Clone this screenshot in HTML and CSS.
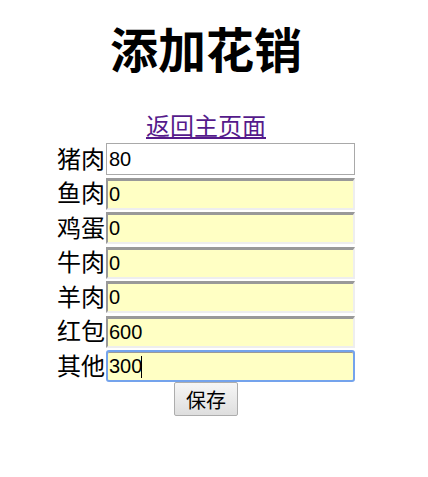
FILE: index.html
```html
<!DOCTYPE html>
<html lang="zh-CN">
  <head>
    <meta charset="UTF-8" />
    <title>添加花销</title>
    <meta name="viewport" content="width=device-width, initial-scale=1.0" />
    <link rel="stylesheet" href="styles.css">
  </head>
  <body>
    <div class="page">
      <h1>添加花销</h1>

      <a class="back" href="#">返回主页面</a>

      <form class="cost-form">
        <div class="row">
          <label for="pork">猪肉</label>
          <input type="text" id="pork" value="80" />
        </div>
        <div class="row">
          <label for="fish">鱼肉</label>
          <input type="text" id="fish" class="filled" value="0" />
        </div>
        <div class="row">
          <label for="egg">鸡蛋</label>
          <input type="text" id="egg" class="filled" value="0" />
        </div>
        <div class="row">
          <label for="beef">牛肉</label>
          <input type="text" id="beef" class="filled" value="0" />
        </div>
        <div class="row">
          <label for="lamb">羊肉</label>
          <input type="text" id="lamb" class="filled" value="0" />
        </div>
        <div class="row">
          <label for="redpack">红包</label>
          <input type="text" id="redpack" class="filled" value="600" />
        </div>
        <div class="row">
          <label for="other">其他</label>
          <input type="text" id="other" class="filled active" value="300" />
          <!-- text cursor after the typed value -->
          <span class="caret"></span>
        </div>

        <button type="submit">保存</button>
      </form>
    </div>
  </body>
</html>
```

FILE: styles.css
```css
body {
  margin: 0;
  font-family: "Noto Sans CJK SC", "Liberation Sans", sans-serif;
  color: #000;
  background: #fff;
}

.page {
  width: 412px;
  display: flex;
  flex-direction: column;
  align-items: center;
}

h1 {
  margin: 19px 0 0;
  font-size: 48px;
  line-height: 56px;
  font-weight: bold;
}

.back {
  margin-top: 35px;
  font-size: 24px;
  line-height: 30px;
  color: #551a8b;
  text-decoration: underline;
}

.cost-form {
  margin-top: 3px;
  display: flex;
  flex-direction: column;
  align-items: center;
  gap: 2.5px;
}

.row {
  position: relative;
  display: flex;
  align-items: center;
  height: 32px;
}

.row label {
  width: 49px;
  font-size: 24px;
  line-height: 30px;
  margin-top: -3px;
}

input {
  box-sizing: border-box;
  width: 249px;
  height: 32px;
  margin: 0;
  padding: 0 2px;
  font-family: "Liberation Sans", Arial, sans-serif;
  font-size: 20px;
  color: #000;
  border: 1px solid #a9a9a9;
  background: #fff;
  outline: none;
}

input.filled {
  background: #ffffc4;
  border-style: solid;
  border-width: 3px 2px 2px 2px;
  border-color: #999 #eee #eee #999;
  padding-left: 1px;
}

input.active {
  border: 2px solid #74a3ec;
  border-radius: 3px;
  box-shadow: inset 0 1px 0 #999;
}

.caret {
  position: absolute;
  left: 84px;
  top: 6px;
  width: 1px;
  height: 22px;
  background: #000;
}

button {
  margin-top: -2.5px;
  width: 64px;
  height: 34px;
  font-family: "Noto Sans CJK SC", sans-serif;
  font-size: 20px;
  color: #000;
  padding: 0;
  border: 1px solid #adadad;
  border-radius: 2px;
  background: linear-gradient(#f6f6f6, #dedede);
}
```
